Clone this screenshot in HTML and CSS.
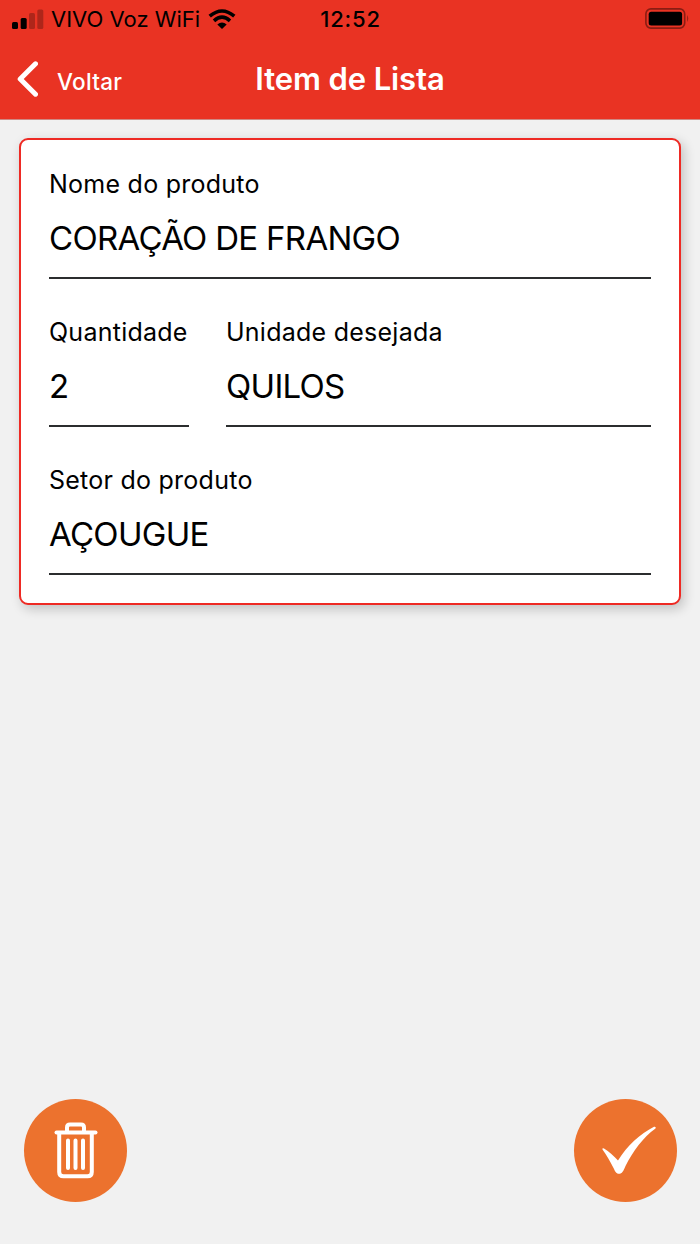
FILE: index.html
```html
<!DOCTYPE html>
<html lang="pt-BR">
	<head>
		<meta charset="utf-8">
		<title>Item de Lista</title>
		<link rel="stylesheet" href="styles.css">
	</head>
	<body>
		<header class="header">
			<div class="status">
				<div class="carrier">
					<svg class="signal" width="32" height="20" viewBox="0 0 32 20">
						<rect x="0" y="13" width="6" height="7" rx="1.5"/>
						<rect x="8.7" y="9" width="6" height="11" rx="1.5"/>
						<rect class="off" x="17" y="4" width="6" height="16" rx="1.5"/>
						<rect class="off" x="25.3" y="0.5" width="6" height="19.5" rx="1.5"/>
					</svg>
					<span class="operator">VIVO Voz WiFi</span>
					<svg class="wifi" width="28" height="20" viewBox="0 0 28 20">
						<path class="arc" d="M1.7 7.2 Q14 -3.2 26.3 7.2"/>
						<path class="arc" d="M6 11.8 Q14 4.6 22 11.8"/>
						<path d="M9.3 15.6 Q14 11.4 18.7 15.6 L14 20 Z"/>
					</svg>
				</div>
				<span class="clock">12:52</span>
				<svg class="battery" width="45" height="21" viewBox="0 0 45 21">
					<rect class="shell" x="1.9" y="0.9" width="38.8" height="19.2" rx="5"/>
					<rect x="4.7" y="3.7" width="33.4" height="13.8" rx="2.5"/>
					<path class="tip" d="M43.2 7 Q45.2 10.5 43.2 14 Z"/>
				</svg>
			</div>
			<div class="navbar">
				<a class="back">
					<svg width="22" height="36" viewBox="0 0 22 36">
						<path d="M19.5 2.8 L4.2 18 L19.5 33.2"/>
					</svg>
					<span>Voltar</span>
				</a>
				<h1>Item de Lista</h1>
			</div>
		</header>
		<main class="content">
			<form class="card">
				<div class="field">
					<label>Nome do produto</label>
					<div class="value">CORAÇÃO DE FRANGO</div>
				</div>
				<div class="row">
					<div class="field small">
						<label>Quantidade</label>
						<div class="value">2</div>
					</div>
					<div class="field">
						<label>Unidade desejada</label>
						<div class="value">QUILOS</div>
					</div>
				</div>
				<div class="field">
					<label>Setor do produto</label>
					<div class="value">AÇOUGUE</div>
				</div>
			</form>
		</main>
		<footer class="actions">
			<a class="round">
				<svg width="44" height="57" viewBox="0 0 44 57">
					<path class="lid" d="M2.5 10.5 H41.5"/>
					<path class="can" d="M5.2 11 V50 Q5.2 54.3 9.5 54.3 H33.5 Q37.8 54.3 37.8 50 V11"/>
					<path class="handle" d="M13 9.5 V5.5 Q13 2.5 16 2.5 H27 Q30 2.5 30 5.5 V9.5"/>
					<path class="bars" d="M14 18.5 V46 M21.5 18.5 V46 M29 18.5 V46"/>
				</svg>
			</a>
			<a class="round">
				<svg class="ok" width="56" height="50" viewBox="0 0 56 50">
					<path class="check" d="M1.5 23.5 Q0.8 22 3 22.4 C8 25.5 13 30 17 34.5 C26 20 39 8 53 0.8 Q55.5 0.2 54.5 2.4 C42 11.5 32 25 24.5 40 C22.5 45 21 47.8 18 47.8 C15 47.8 14 45 12.5 42 C9 35 5.5 29 1.5 23.5 Z"/>
				</svg>
			</a>
		</footer>
	</body>
</html>
```
FILE: styles.css
```css
*{
	box-sizing:border-box;
}
body{
	margin:0;
	height:1244px;
	display:flex;
	flex-direction:column;
	background-color:#f1f1f1;
	font-family:Inter, "Liberation Sans", sans-serif;
	color:#000;
}
.header{
	height:120px;
	background-color:#e93323;
	border-bottom:1px solid #cf8a84;
}
.status{
	height:38px;
	padding:0 11px 0 12px;
	display:grid;
	grid-template-columns:1fr auto 1fr;
	align-items:center;
}
.carrier{
	display:flex;
	align-items:center;
}
.operator{
	margin:0 8px 0 7px;
	font-size:22px;
	white-space:nowrap;
}
.signal{
	margin-bottom:1px;
}
.off{
	opacity:0.25;
}
.arc{
	fill:none;
	stroke:#000;
	stroke-width:3.6;
}
.clock{
	font-size:22px;
	font-weight:500;
	letter-spacing:0.8px;
}
.battery{
	justify-self:end;
	margin-bottom:1px;
}
.shell{
	fill:none;
	stroke:#8a1d13;
	stroke-width:1.6;
}
.tip{
	fill:#8a1d13;
}
.navbar{
	height:80px;
	padding:0 16px;
	display:grid;
	grid-template-columns:1fr auto 1fr;
	align-items:center;
	color:#fff;
}
.back{
	display:flex;
	align-items:center;
	gap:19px;
	padding-top:2px;
	font-size:22.5px;
	font-weight:500;
	letter-spacing:0.3px;
}
.back svg{
	fill:none;
	stroke:#fff;
	stroke-width:5;
	stroke-linecap:round;
	stroke-linejoin:round;
}
.back span{
	padding-top:5px;
}
h1{
	margin:0;
	font-size:31px;
	font-weight:600;
	letter-spacing:-0.1px;
}
.content{
	flex:1;
	padding:18px 19px;
}
.card{
	height:467px;
	padding:28px 28px 0;
	background-color:#fff;
	border:2px solid #ee2a24;
	border-radius:9px;
	box-shadow:3px 4px 12px rgba(0,0,0,0.2);
}
.row{
	display:flex;
	gap:37px;
}
.field{
	flex:1;
	height:111px;
	margin-bottom:37px;
	border-bottom:2px solid #2b2d2e;
}
.small{
	flex:none;
	width:140px;
}
label{
	display:block;
	font-size:25px;
	line-height:32px;
	letter-spacing:0.25px;
	white-space:nowrap;
}
.value{
	padding-top:16px;
	font-size:33px;
	line-height:44px;
	letter-spacing:-0.7px;
	white-space:nowrap;
}
.actions{
	display:flex;
	justify-content:space-between;
	padding:0 23px 42px 24px;
}
.round{
	width:103px;
	height:103px;
	display:flex;
	align-items:center;
	justify-content:center;
	border-radius:50%;
	background-color:#ec722e;
}
.round svg{
	fill:none;
	stroke:#fff;
	stroke-width:4;
	stroke-linecap:round;
}
.round .ok{
	margin-left:7px;
}
.round .check{
	fill:#fff;
	stroke:none;
}
```
